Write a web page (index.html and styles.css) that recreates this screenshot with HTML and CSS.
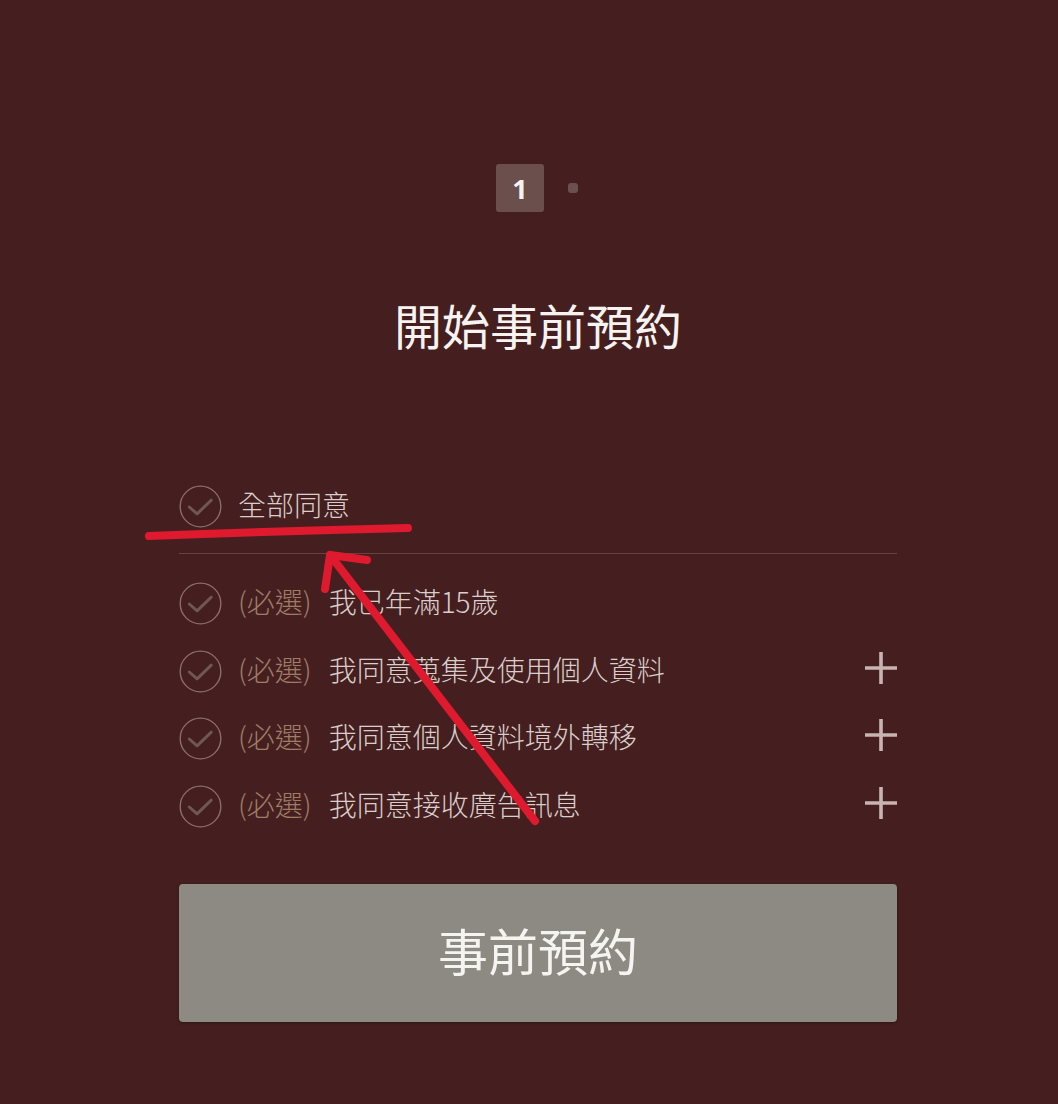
FILE: index.html
```html
<!DOCTYPE html>
<html lang="zh-Hant">
<head>
<meta charset="utf-8">
<title>開始事前預約</title>
<link rel="stylesheet" href="styles.css">
</head>
<body>
<div class="page">
  <div class="content">
    <div class="stepper">
      <div class="step-box">1</div>
      <div class="step-dot"></div>
    </div>
    <h1 class="title">開始事前預約</h1>

    <div class="agree-all">
      <div class="row">
        <span class="check"><svg viewBox="0 0 44 44" width="43" height="43"><circle cx="22" cy="22" r="20.8" fill="none" stroke="#8a6e69" stroke-width="1.4"/><path d="M10.5 22.5 L18.5 29.5 L33 15.5" fill="none" stroke="#6f5753" stroke-width="3" stroke-linecap="round" stroke-linejoin="round"/></svg></span>
        <span class="label">全部同意</span>
      </div>
    </div>

    <div class="items">
      <div class="row">
        <span class="check"><svg viewBox="0 0 44 44" width="43" height="43"><circle cx="22" cy="22" r="20.8" fill="none" stroke="#8a6e69" stroke-width="1.4"/><path d="M10.5 22.5 L18.5 29.5 L33 15.5" fill="none" stroke="#6f5753" stroke-width="3" stroke-linecap="round" stroke-linejoin="round"/></svg></span>
        <span class="req">(必選)</span>
        <span class="label">我已年滿15歲</span>
      </div>
      <div class="row">
        <span class="check"><svg viewBox="0 0 44 44" width="43" height="43"><circle cx="22" cy="22" r="20.8" fill="none" stroke="#8a6e69" stroke-width="1.4"/><path d="M10.5 22.5 L18.5 29.5 L33 15.5" fill="none" stroke="#6f5753" stroke-width="3" stroke-linecap="round" stroke-linejoin="round"/></svg></span>
        <span class="req">(必選)</span>
        <span class="label">我同意蒐集及使用個人資料</span>
        <span class="plus"><svg viewBox="0 0 32 32" width="32" height="32"><path d="M16 0 V32 M0 16 H32" stroke="#c8b4b3" stroke-width="3.6"/></svg></span>
      </div>
      <div class="row">
        <span class="check"><svg viewBox="0 0 44 44" width="43" height="43"><circle cx="22" cy="22" r="20.8" fill="none" stroke="#8a6e69" stroke-width="1.4"/><path d="M10.5 22.5 L18.5 29.5 L33 15.5" fill="none" stroke="#6f5753" stroke-width="3" stroke-linecap="round" stroke-linejoin="round"/></svg></span>
        <span class="req">(必選)</span>
        <span class="label">我同意個人資料境外轉移</span>
        <span class="plus"><svg viewBox="0 0 32 32" width="32" height="32"><path d="M16 0 V32 M0 16 H32" stroke="#c8b4b3" stroke-width="3.6"/></svg></span>
      </div>
      <div class="row">
        <span class="check"><svg viewBox="0 0 44 44" width="43" height="43"><circle cx="22" cy="22" r="20.8" fill="none" stroke="#8a6e69" stroke-width="1.4"/><path d="M10.5 22.5 L18.5 29.5 L33 15.5" fill="none" stroke="#6f5753" stroke-width="3" stroke-linecap="round" stroke-linejoin="round"/></svg></span>
        <span class="req">(必選)</span>
        <span class="label">我同意接收廣告訊息</span>
        <span class="plus"><svg viewBox="0 0 32 32" width="32" height="32"><path d="M16 0 V32 M0 16 H32" stroke="#c8b4b3" stroke-width="3.6"/></svg></span>
      </div>
    </div>

    <button class="submit" type="button">事前預約</button>
  </div>
</div>
<svg class="annotation" viewBox="0 0 1058 1104" width="1058" height="1104">
  <path d="M149 536 Q 280 531 408 528" fill="none" stroke="#e01a2e" stroke-width="8" stroke-linecap="round"/>
  <path d="M535 821 L330 555" fill="none" stroke="#e01a2e" stroke-width="8" stroke-linecap="round"/>
  <path d="M367 560 L330 555 L325 589" fill="none" stroke="#e01a2e" stroke-width="8" stroke-linecap="round" stroke-linejoin="round"/>
</svg>
</body>
</html>
```

FILE: styles.css
```css
html, body {
  margin: 0;
  padding: 0;
}
body {
  background: #451f1f;
  width: 1058px;
  height: 1104px;
  overflow: hidden;
  position: relative;
  font-family: "Noto Sans CJK TC", "Noto Sans", sans-serif;
}
.page {
  padding-left: 18px;
}
.content {
  width: 718px;
  margin: 0 auto;
  padding-top: 164px;
}
.stepper {
  display: flex;
  align-items: center;
  gap: 24px;
  padding-left: 317px;
}
.step-box {
  width: 48px;
  height: 48px;
  background: #6b4f4d;
  border-radius: 3px;
  color: #f7f2f0;
  font-family: "Noto Sans", "DejaVu Sans", sans-serif;
  font-weight: 700;
  font-size: 27px;
  line-height: 1;
  display: flex;
  align-items: center;
  justify-content: center;
}
.step-dot {
  width: 10px;
  height: 10px;
  border-radius: 3px;
  background: #6c5050;
}
.title {
  margin: 80px 0 0;
  text-align: center;
  font-weight: 400;
  font-size: 48px;
  line-height: 64px;
  color: #f7f3f1;
}
.agree-all {
  margin-top: 129px;
  padding-bottom: 25px;
  border-bottom: 1px solid #65433f;
}
.row {
  display: flex;
  align-items: center;
  height: 43px;
}
.check {
  width: 43px;
  height: 43px;
  flex: none;
  margin-right: 16px;
}
.check svg {
  display: block;
}
.label {
  font-size: 28px;
  font-weight: 300;
  line-height: 43px;
  padding-bottom: 4px;
  color: #d9cecc;
}
.req {
  font-size: 28px;
  font-weight: 300;
  line-height: 43px;
  padding-bottom: 4px;
  color: #9e7c66;
  margin-right: 17px;
}
.items {
  margin-top: 28px;
  display: flex;
  flex-direction: column;
  gap: 24.5px;
}
.plus {
  margin-left: auto;
  width: 32px;
  height: 32px;
  margin-top: -7px;
}
.plus svg {
  display: block;
}
.submit {
  display: block;
  margin-top: 56px;
  width: 718px;
  height: 138px;
  border: none;
  border-radius: 4px;
  background: #8c8a83;
  box-shadow: 0 1px 3px rgba(0,0,0,0.35);
  color: #f6f4f0;
  font-family: "Noto Sans CJK TC", "Noto Sans", sans-serif;
  font-size: 50px;
  font-weight: 400;
  padding: 0 0 8px;
}
.annotation {
  position: absolute;
  left: 0;
  top: 0;
  pointer-events: none;
}
```
